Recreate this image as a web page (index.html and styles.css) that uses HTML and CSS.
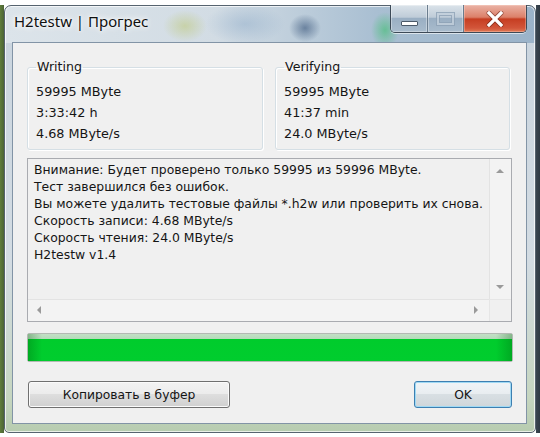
FILE: index.html
```html
<!DOCTYPE html>
<html lang="ru">
<head>
<meta charset="utf-8">
<title>H2testw | Прогрес</title>
<link rel="stylesheet" href="styles.css">
</head>
<body>
<div class="desk">
  <div class="win">
    <div class="titlebar">
      <div class="title">H2testw | Прогрес</div>
      <div class="caps">
        <div class="cap min"><span class="min-glyph"></span></div>
        <div class="cap max"><span class="max-glyph"></span></div>
        <div class="cap close">
          <svg width="20" height="16" viewBox="0 0 20 16">
            <path d="M4 2 L16 14 M16 2 L4 14" stroke="#5a1a10" stroke-width="5" stroke-linecap="round" opacity="0.55"/>
            <path d="M4 2 L16 14 M16 2 L4 14" stroke="#ffffff" stroke-width="3.2" stroke-linecap="square"/>
          </svg>
        </div>
      </div>
    </div>
    <div class="client">
      <div class="groups">
        <fieldset class="grp grp-w">
          <legend>Writing</legend>
          <div class="val">59995 MByte</div>
          <div class="val">3:33:42 h</div>
          <div class="val">4.68 MByte/s</div>
        </fieldset>
        <fieldset class="grp grp-v">
          <legend>Verifying</legend>
          <div class="val">59995 MByte</div>
          <div class="val">41:37 min</div>
          <div class="val">24.0 MByte/s</div>
        </fieldset>
      </div>
      <div class="memo">
        <div class="memo-text">
          <div>Внимание: Будет проверено только 59995 из 59996 MByte.</div>
          <div>Тест завершился без ошибок.</div>
          <div>Вы можете удалить тестовые файлы *.h2w или проверить их снова.</div>
          <div>Скорость записи: 4.68 MByte/s</div>
          <div>Скорость чтения: 24.0 MByte/s</div>
          <div>H2testw v1.4</div>
        </div>
        <div class="vscroll">
          <span class="arr arr-up"></span>
          <span class="arr arr-down"></span>
        </div>
        <div class="hscroll">
          <span class="arr arr-left"></span>
          <span class="arr arr-right"></span>
        </div>
        <div class="corner"></div>
      </div>
      <div class="progress"><div class="fill"></div></div>
      <div class="buttons">
        <button class="btn btn-copy">Копировать в буфер</button>
        <button class="btn btn-ok">OK</button>
      </div>
    </div>
  </div>
</div>
</body>
</html>
```

FILE: styles.css
```css
* { box-sizing: border-box; }

body {
  margin: 0;
  background: #ffffff;
  font-family: "DejaVu Sans", "Liberation Sans", sans-serif;
  color: #111;
}

.desk {
  width: 540px;
  height: 437px;
  padding: 5px 0 0 4px;
  background:
    linear-gradient(90deg, #5f7d3a 0, #4c6436 4px, transparent 4px, transparent 536px, #3a4650 536px, #2f3a44 540px)
    no-repeat 0 5px / 540px 428px;
}

.win {
  width: 532px;
  height: 428px;
  border: 1px solid #56636f;
  border-radius: 7px 7px 5px 5px;
  padding: 0 8px 8px 7px;
  display: flex;
  flex-direction: column;
  box-shadow: inset 0 0 0 1px rgba(255,255,255,0.7);
  background:
    radial-gradient(ellipse 22px 16px at 180px 20px, rgba(190,200,120,0.55), transparent),
    radial-gradient(ellipse 16px 14px at 300px 22px, rgba(40,70,110,0.55), transparent),
    radial-gradient(ellipse 14px 18px at 380px 24px, rgba(60,190,110,0.6), transparent),
    radial-gradient(ellipse 40px 20px at 240px 18px, rgba(140,170,200,0.45), transparent),
    linear-gradient(90deg, #dce4ea 0, #d2dce4 40%, #a9bfd2 70%, #9bb3c9 100%) no-repeat 0 0 / 100% 37px,
    linear-gradient(180deg, #c9d4de 0, #d3dce3 60%, #c6d6c0 92%, #b7ccb0 100%);
}

.titlebar {
  height: 36px;
  flex: none;
  display: flex;
  justify-content: space-between;
  align-items: flex-start;
}

.title {
  margin: 5px 0 0 2px;
  font-family: "Noto Sans", "DejaVu Sans", sans-serif;
  font-size: 15px;
  line-height: 21px;
  color: #101010;
  text-shadow: 0 0 6px #ffffff, 0 0 3px #ffffff, 0 0 10px rgba(255,255,255,0.8);
}

.caps {
  display: flex;
  margin-top: -1px;
  height: 28px;
  border: 1px solid #3d4a57;
  border-top: none;
  border-radius: 0 0 5px 5px;
  overflow: hidden;
  box-shadow: 0 1px 0 rgba(255,255,255,0.6);
}

.cap {
  height: 27px;
  display: flex;
  align-items: center;
  justify-content: center;
}

.min { width: 37px; }
.max { width: 36px; }
.close { width: 62px; }

.min, .max {
  background: linear-gradient(#dbe3ea 0, #bfccd8 45%, #9aafc3 50%, #a9bccd 100%);
  border-right: 1px solid #6b7d8e;
  box-shadow: inset 0 0 0 1px rgba(255,255,255,0.35);
}

.close {
  background: linear-gradient(#eab3a6 0, #dc8069 45%, #c63e22 52%, #d2553a 85%, #e07a55 100%);
  box-shadow: inset 0 0 0 1px rgba(255,220,210,0.35);
}

.min-glyph {
  width: 17px;
  height: 5px;
  margin-top: 10px;
  background: #ffffff;
  border: 1px solid #4b5a6a;
  border-radius: 1px;
}

.max-glyph {
  width: 19px;
  height: 14px;
  border: 1px solid #8ea2b6;
  box-shadow: inset 0 0 0 2px #c3d0dc, inset 0 0 0 3px #8ea2b6;
  opacity: 0.8;
}

.client {
  flex: 1;
  background: #f0f0f0;
  border: 1px solid #8294a6;
  padding: 17px 14px 0 14px;
  display: flex;
  flex-direction: column;
}

.groups {
  display: flex;
  gap: 12px;
}

.grp {
  margin: 0;
  min-width: 0;
  border: 1px solid #d5dfe5;
  border-radius: 3px;
  padding: 7px 0 5px 8px;
  box-shadow: 1px 1px 0 #ffffff, inset 1px 1px 0 #ffffff;
}

.grp-w { width: 236px; }
.grp-v { width: 235px; }

.grp legend {
  padding: 0 1px;
  font-size: 12.6px;
  line-height: 14px;
  color: #151515;
}

.val {
  font-size: 12.8px;
  line-height: 21px;
  color: #151515;
}

.memo {
  margin-top: 8px;
  width: 485px;
  height: 164px;
  border: 1px solid #a9abb0;
  background: #f0f0f0;
  display: grid;
  grid-template-columns: 1fr 22px;
  grid-template-rows: 1fr 22px;
}

.memo-text {
  padding: 2px 0 0 6px;
  font-size: 12.4px;
  line-height: 17px;
  white-space: nowrap;
  overflow: hidden;
  color: #151515;
}

.vscroll {
  position: relative;
  background: #f3f3f3;
  border-left: 1px solid #e3e3e3;
}

.hscroll {
  position: relative;
  background: #f3f3f3;
  border-top: 1px solid #e3e3e3;
}

.corner {
  background: #f0f0f0;
  border-top: 1px solid #e6e6e6;
  border-left: 1px solid #e6e6e6;
}

.arr {
  position: absolute;
  width: 0;
  height: 0;
  border-style: solid;
  border-color: transparent;
}

.arr-up {
  left: 6px;
  top: 10px;
  border-width: 0 4px 4px 4px;
  border-bottom-color: #9a9a9a;
}

.arr-down {
  left: 6px;
  bottom: 10px;
  border-width: 4px 4px 0 4px;
  border-top-color: #9a9a9a;
}

.arr-left {
  left: 9px;
  top: 6px;
  border-width: 4px 4px 4px 0;
  border-right-color: #9a9a9a;
}

.arr-right {
  right: 11px;
  top: 6px;
  border-width: 4px 0 4px 4px;
  border-left-color: #9a9a9a;
}

.progress {
  margin-top: 11px;
  width: 486px;
  height: 29px;
  border: 1px solid #b3b9b3;
  border-radius: 2px;
  background: #e6e6e6;
}

.fill {
  height: 100%;
  background:
    linear-gradient(90deg, rgba(0,90,10,0.3) 0, rgba(0,90,10,0) 14px, rgba(0,90,10,0) calc(100% - 16px), rgba(0,90,10,0.3) 100%),
    linear-gradient(#c3e0c6 0, #b4dab9 5px, #00cc2c 5px, #00cd2e 100%);
}

.buttons {
  margin-top: 19px;
  display: flex;
  justify-content: space-between;
  padding-left: 1px;
}

.btn {
  height: 27px;
  margin: 0;
  padding: 0;
  font-family: "DejaVu Sans", "Liberation Sans", sans-serif;
  font-size: 12.3px;
  color: #151515;
  border: 1px solid #707070;
  border-radius: 3px;
  background: linear-gradient(#f3f3f3 0, #ececec 48%, #dedede 50%, #d0d0d0 100%);
  box-shadow: inset 0 0 0 1px #fbfbfb;
}

.btn-copy { width: 202px; }

.btn-ok {
  width: 98px;
  border-color: #3c7fb1;
  box-shadow: inset 0 0 0 1px #9fd9f4;
  background: linear-gradient(#f0f4f7 0, #e8edf0 48%, #d8dfe3 50%, #cfd6da 100%);
}
```
